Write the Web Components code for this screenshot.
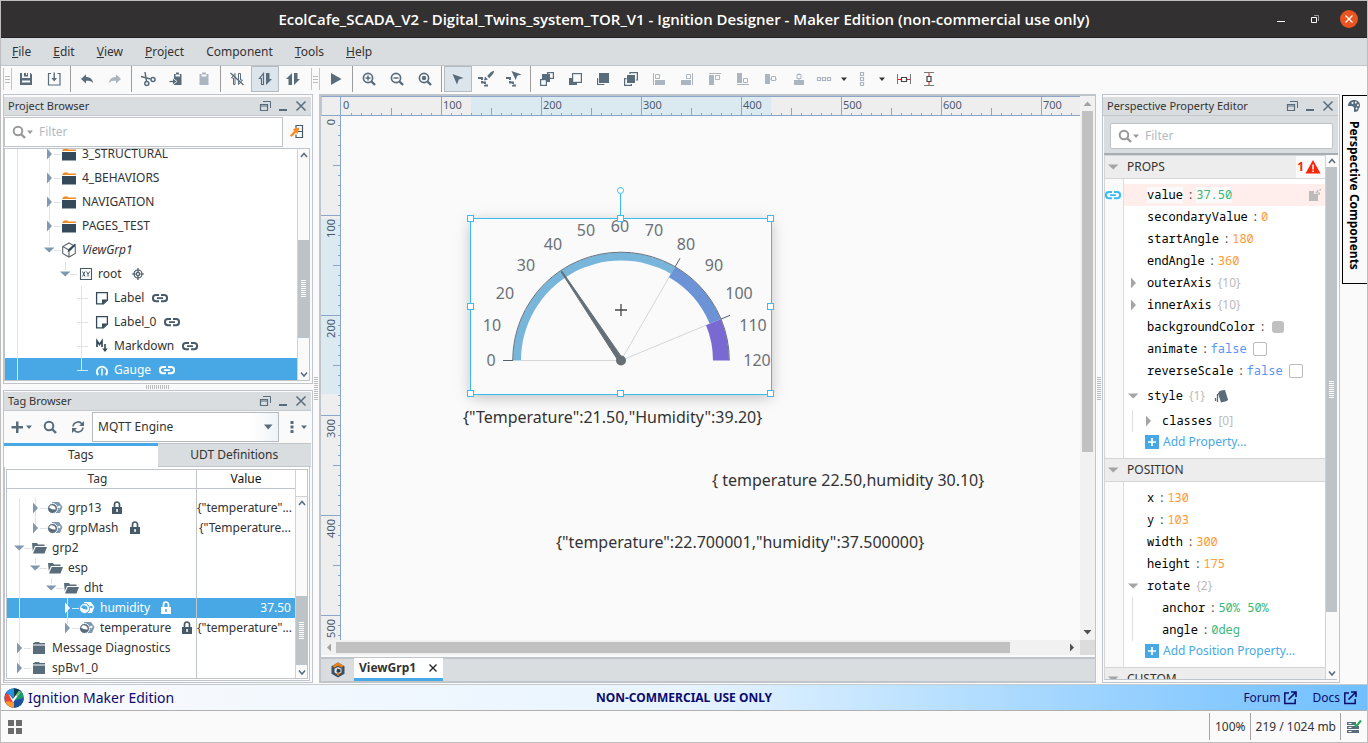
<!DOCTYPE html>
<html lang="en">
<head>
<meta charset="utf-8">
<title>Ignition Designer</title>
<style>
html, body { margin: 0; height: 100%; }
body { font-family: "Noto Sans", "Open Sans", sans-serif; font-size: 12px; line-height: 16px; color: #333; background: #fafafa; overflow: hidden; }
</style>
</head>
<body>
<designer-app></designer-app>
<script>
const ICONS = {
  save: '<path fill-rule="evenodd" d="M2 2h2v5h8V2h.6L14 3.500V14H2zM4 9.500v2h8v-2z"/><path d="M6 2h4v3.500H6z"/><path d="M8 2h1v2H8z" fill="#fafafa"/>',
  import: '<path d="M5 2.500H2.500v11.500h11.500V2.500H11.500" fill="none" stroke="currentColor" stroke-width="1.200"/><path d="M7.500 1.500h1.400V7H11l-2.800 3.500L5.400 7h2.100z"/>',
  undo: '<path d="M7 3.200V6c4 0 6.500 2 7.300 6.300C12.600 10.200 10.500 9.700 7 9.800v2.700L2 7.900z"/>',
  redo: '<path d="M9 3.200V6c-4 0-6.500 2-7.300 6.300C3.400 10.200 5.500 9.700 9 9.800v2.700l5-4.600z"/>',
  cut: '<g fill="none" stroke="currentColor" stroke-width="1.500"><path d="M5 1l1.500 9M1 5.500l9.500 2.500"/><circle cx="6.800" cy="12.600" r="2"/><circle cx="13" cy="8.600" r="2"/></g>',
  copy: '<path d="M6 3h2V1.500h3V3h2.500v11H6z"/><path d="M7.500 3.500h4.500v2H7.500z" fill="#fafafa"/><path d="M1 9.500h3.500V7L9 10.500 4.500 14v-2.500H1z" stroke="#fafafa" stroke-width=".8"/>',
  paste: '<path d="M3.500 3H6V1.500h4V3h2.500v11h-9z"/><path d="M5.500 3.500h5v2h-5z" fill="#fafafa"/>',
  commOff: '<g fill="none" stroke="currentColor"><path d="M4.500 13.500V7H2.500L6 2.500V13.500zM9.500 2.500v11L13.500 9h-2V2.500z"/><path d="M1.500 2l13 12" stroke-width="1.300"/></g>',
  commRead: '<path d="M4.500 13.500V7.500H2.500L6.500 2.500v11z" fill="none" stroke="currentColor" stroke-width="1.200"/><path d="M9 2h3.500v6H15L9 14z"/>',
  commRw: '<path d="M7 2v12H3.500V8H1zM9 2h3.500v6H15L9 14z"/>',
  play: '<path d="M3 2l10.500 6L3 14z"/>',
  zoomIn: '<g fill="none" stroke="currentColor"><circle cx="7" cy="7" r="4.600" stroke-width="1.700"/><path d="M10.500 10.500l3.500 3.500" stroke-width="2.400"/><path d="M4.500 7h5M7 4.500v5" stroke-width="1.500"/></g>',
  zoomOut: '<g fill="none" stroke="currentColor"><circle cx="7" cy="7" r="4.600" stroke-width="1.700"/><path d="M10.500 10.500l3.500 3.500" stroke-width="2.400"/><path d="M4.500 7h5" stroke-width="1.500"/></g>',
  zoomFit: '<g fill="none" stroke="currentColor"><circle cx="7" cy="7" r="4.600" stroke-width="1.700"/><path d="M10.500 10.500l3.500 3.500" stroke-width="2.400"/></g><circle cx="7" cy="7" r="2.200"/>',
  pointer: '<path d="M2.500 3l11 4-4.700 1.500L7 13.500z"/>',
  pathDraw: '<path d="M0 7h4v4.500h3v3h3" fill="none" stroke="currentColor" stroke-width="1.900" stroke-dasharray="6 1"/><path d="M7 5.500l3 3-4 1zM9.200 5L12.500 1.500q3-2 3.500-1.500t-1.500 3.500L11.200 7.300z"/>',
  pathEdit: '<path d="M0 7h4v4.500h3v3h3" fill="none" stroke="currentColor" stroke-width="1.900" stroke-dasharray="6 1"/><path d="M5.500 0l10 3.500-4.300 1.300L9.700 9z"/>',
  order1: '<rect x="8.600" y="1.600" width="5.800" height="5.800" fill="#fafafa" stroke="currentColor" stroke-width="1.200"/><path d="M3 3h8v8H3z"/><rect x="1.600" y="8.600" width="5.800" height="5.800" fill="#fafafa" stroke="currentColor" stroke-width="1.200"/>',
  order2: '<path d="M2 7h4v4h4v3H2z"/><rect x="5.600" y="2.600" width="8.800" height="8.800" fill="#fafafa" stroke="currentColor" stroke-width="1.200"/>',
  order3: '<path d="M4 2h10v10H4z"/><path d="M3 7.500H2.600v6h6.200V13" fill="none" stroke="currentColor" stroke-width="1.200"/>',
  order4: '<path d="M4 4h8v8H4z"/><path d="M7 3V1.600h7.400v7.400H13M3.500 7.600H1.600v6.800h6.800V13" fill="none" stroke="currentColor" stroke-width="1.200"/>',
  alignL: '<path d="M2 2h1v12H2zM4 9h10v5H4z"/><path d="M4.500 3.500h4v4h-4z" fill="none" stroke="currentColor"/>',
  alignR: '<path d="M13 2h1v12h-1zM2 9h10v5H2z"/><path d="M7.500 3.500h4v4h-4z" fill="none" stroke="currentColor"/>',
  alignT: '<path d="M2 2h12v1H2zM2 4h5v10H2z"/><path d="M8.500 4.500h4v4h-4z" fill="none" stroke="currentColor"/>',
  alignB: '<path d="M2 13h12v1H2zM2 2h5v10H2z"/><path d="M8.500 7.500h4v4h-4z" fill="none" stroke="currentColor"/>',
  centerV: '<path d="M2 3h5v10H2zM7 7.500h2v1H7zM12 7.500h2v1h-2z"/><path d="M8.500 5.500h4v4h-4z" fill="none" stroke="currentColor"/>',
  centerH: '<path d="M3 9h10v5H3zM7.500 2h1v2h-1zM7.500 7h1v2h-1z"/><path d="M6 3.500h4v4H6z" fill="none" stroke="currentColor"/>',
  distH: '<path d="M1.500 6.500h3v3h-3zM6.500 6.500h3v3h-3zM11.500 6.500h3v3h-3z" fill="none" stroke="currentColor" stroke-width="1.200"/>',
  distV: '<path d="M6.500 1.500h3v3h-3zM6.500 6.500h3v3h-3zM6.500 11.500h3v3h-3z" fill="none" stroke="currentColor" stroke-width="1.200"/>',
  stretchH: '<path d="M1.500 3v10M14.500 3v10" stroke="#777"/><path d="M2 8.500h12" stroke="#e02020"/><path d="M5.500 6.500h5v4h-5z" fill="#fff" stroke="#444" stroke-width="1.200"/>',
  stretchV: '<path d="M3 1.500h10M3 14.500h10" stroke="#777"/><path d="M8 2v12" stroke="#e02020"/><path d="M6 5.500h4v5H6z" fill="#fff" stroke="#444" stroke-width="1.200"/>',
  drop: '<path d="M5 6.500h6L8 10z"/>',
  dropBig: '<path d="M4 5.500h8.500L8.200 10.500z"/>',
  open: '<path d="M3 5.500h10.500L8.200 10.500z"/>',
  closed: '<path d="M6 2.500L11 8l-5 5.500z"/>',
  float: '<g fill="none" stroke="currentColor"><path d="M3.500 6.500h7v6h-7zM3.500 8h7" stroke-width="1.200"/><path d="M6 3.500h7.500v6.500"/></g>',
  min: '<path d="M4 11h8v2H4z"/>',
  close: '<path d="M3.500 3.500l9 9M12.500 3.500l-9 9" stroke="currentColor" stroke-width="1.500"/>',
  search: '<circle cx="7" cy="7" r="4.300" fill="none" stroke="currentColor" stroke-width="2"/><path d="M10 10l4 4" stroke="currentColor" stroke-width="2.400"/>',
  locate: '<path d="M7 6V2.500h6.500v12H7V11.500M7.500 8.500h6" fill="none" stroke="#465a69" stroke-width="1.200"/><path d="M1 12.500l4-4.500-1-2L10.500 4.500 8.500 11 7 9.500 2.500 14z" fill="#ff8a1e"/>',
  folderO: '<path d="M2 3.500l1-1h3.500l1 1H15V5H1z" fill="#f58a1f"/><path d="M1 6h14v8.500H1z" fill="#344a5a"/>',
  view: '<g fill="none" stroke="#5c6670" stroke-width="1.100"><path d="M8 1l6.300 3.500v7L8 15l-6.300-3.500v-7zM1.700 4.500L8 8v7M8 8l3-1.500"/></g><path d="M6.500 10l1-3 6.500-5.500 1 1.500L9 9z" fill="#344a5a"/>',
  root: '<path d="M3.500 2.500h11v11h-11z" fill="none" stroke="#465a69" stroke-width="1.100"/><path d="M5.500 5.500l2.500 5M8 5.500l-2.500 5M9.500 5.500l1.500 2.500v2.500M12.800 5.500L11 8" stroke="#465a69" fill="none"/>',
  target: '<g fill="none" stroke="#465a69" stroke-width="1.200"><circle cx="8" cy="8" r="4"/><circle cx="8" cy="8" r="1.600"/><path d="M8 2v4M8 10v4M2 8h4M10 8h4"/></g>',
  label: '<path d="M3.600 2.600h10.800v7.600l-4 3.700H3.600z" fill="none" stroke="#344a5a" stroke-width="1.300"/><path d="M9 14.500V9.500h5.500z" fill="#344a5a"/>',
  md: '<path d="M4 9V3l2.500 3.500L9 3v6" fill="none" stroke="#344a5a" stroke-width="1.700"/><path d="M11.200 6h1.600v4.500h2L12 14l-2.800-3.500h2z" fill="#344a5a"/>',
  gauge: '<path d="M5.200 13A5 5 0 1 1 12.800 13" fill="none" stroke="currentColor" stroke-width="2"/><path d="M8.300 6.500h1.400v7H8.300z"/>',
  link: '<path d="M7 5H4a3 3 0 0 0 0 6.200h3M9 5h3a3 3 0 0 1 0 6.200H9M5 8.100h6" fill="none" stroke="currentColor" stroke-width="1.900"/>',
  plus: '<path d="M7 2.500h2.500V7H14v2.500H9.500V14H7V9.500H2.500V7H7z"/>',
  refresh: '<path d="M3 7.500A5 5 0 0 1 12 5M13 8.500A5 5 0 0 1 4 11" fill="none" stroke="currentColor" stroke-width="1.600"/><path d="M14 2v5H9zM2 14V9h5z"/>',
  dots: '<path d="M6.500 2h3v3h-3zM6.500 6.500h3v3h-3zM6.500 11h3v3h-3z"/>',
  tag: '<path d="M5 2h7l3.500 5-2.500 6H8z" fill="#7e98b0"/><circle cx="12.300" cy="7" r="1.200" fill="#fff"/><circle cx="5.500" cy="8.500" r="5" fill="#5a6b7b" stroke="#fff"/><path d="M2 7.500Q3 4.500 6 5.500T8.500 9.500Q5 10 2 7.500z" fill="#fff"/>',
  tagSel: '<path d="M5 2h7l3.500 5-2.500 6H8z" fill="#fff"/><circle cx="12.300" cy="7" r="1.200" fill="#47a8e5"/><circle cx="5.500" cy="8.500" r="5" fill="#fff" stroke="#47a8e5"/><path d="M2 7.500Q3 4.500 6 5.500T8.500 9.500Q5 10 2 7.500z" fill="#47a8e5"/>',
  folderOpen: '<path d="M1 3h5l1 1.500h6.500V6H4L1.800 11z"/><path d="M4.700 7H16l-2.500 6.500H2z"/>',
  folder: '<path d="M3 3l1-1h4l1 1h5v1.500H2V3zM2 5.500h12v8.500H2z"/>',
  lock: '<path fill-rule="evenodd" d="M3 7h10v7H3zM7.300 9v3h1.500V9z"/><path d="M5.500 7V4.500a2.500 2.500 0 0 1 5 0V7" fill="none" stroke="currentColor" stroke-width="1.700"/>',
  up: '<path d="M5 10l3-3.500 3 3.500" fill="none" stroke="currentColor" stroke-width="1.500"/>',
  down: '<path d="M5 6.500L8 10l3-3.500" fill="none" stroke="currentColor" stroke-width="1.500"/>',
  warn: '<path d="M8 1l7.500 13.500H.5z" fill="#f5270b"/><path d="M7.300 5.500h1.500v5H7.300zM7.300 11.500h1.500V13H7.300z" fill="#fff"/>',
  note: '<path d="M2 4h5v3h4v7H2z"/><path d="M8.500 4.500h2v2h-2zM11 5.500h2v2h-2zM12.500 2h1.500v1.500h-1.500zM10 3h1.500v1.500H10z"/>',
  style: '<path d="M5 5.500Q6 3 8 2.500L12 2l3 9.500-1 1.500-6 1.500z"/><path d="M4.500 6v8M2.500 10v3" stroke="currentColor" stroke-width="1.300"/>',
  add: '<path d="M1 1h14v14H1z" fill="#47a8e5"/><path d="M4 8h8M8 4v8" stroke="#fff" stroke-width="1.700"/>',
  ext: '<path d="M7 3H2.800v10.500h10.400V9" fill="none" stroke="currentColor" stroke-width="1.500"/><path d="M9 2h5v5M13.500 2.500L6.500 9.500" fill="none" stroke="currentColor" stroke-width="1.600"/>',
  palette: '<path fill-rule="evenodd" d="M8 2c4 0 6 2.500 6 5.500 0 2.500-1.500 2.500-1.500 4S11 14 8 14v-3.500c0-1.500-1-2.500-3-2.500H2c0-4 3-6 6-6z"/><g fill="#fafafa"><circle cx="6.500" cy="5" r="1"/><circle cx="9.800" cy="4.600" r="1"/><circle cx="12" cy="7.300" r="1"/><circle cx="10.500" cy="10.500" r="1"/></g>',
  grid: '<path d="M1 1h6v6H1zM9 1h6v6H9zM1 9h6v6H1zM9 9h6v6H9z"/>',
  server: '<path d="M1 3h9v3H1zM1 7h12v3H1zM1 11h12v3H1z"/><path d="M2.500 4.500h3M2.500 8.500h3M2.500 12.500h3" stroke="#fff"/><path d="M8 4.500l2.500 2.500L15 1.500" fill="none" stroke="#27a35a" stroke-width="2"/>',
  cube: '<path d="M8 .5l6.500 3.800v7.400L8 15.500 1.500 11.700V4.300z" fill="#3c5060"/><path d="M8 .5l5.500 3.300-1.500 2L8 3.800 4 5.800l-1.500-2z" fill="#e8811f"/><path d="M8 5l3.500 1.800v3.700L8 12.500 4.500 10.500V6.800z" fill="#e3e7ea"/><path d="M7 6.500l3.500 1v2.500L8 11l-1.500-1z" fill="#2c3f4e"/><path d="M8 10.500l1.800 1-1.800 2.500-1.800-2.500z" fill="#e8811f"/>'
};

/* Registers an element; markup may be a string or a function of the host. */
function define(tag, css, markup, after) {
  customElements.define(tag, class extends HTMLElement {
    connectedCallback() {
      if (this.shadowRoot) return;
      const root = this.attachShadow({ mode: 'open' });
      const t = document.createElement('template');
      t.innerHTML = `<style>:host,*{box-sizing:border-box}${css}</style>` + (typeof markup === 'function' ? markup(this) : markup);
      root.append(t.content.cloneNode(true));
      if (after) after(root, this);
    }
  });
}
const at = (el, n, d = '') => el.getAttribute(n) ?? d;

define('ui-icon', `:host{display:inline-block;width:16px;height:16px;flex:none}svg{display:block;width:100%;height:100%}`,
  el => `<svg viewBox="0 0 16 16" fill="currentColor" aria-hidden="true">${ICONS[at(el, 'name')] || ''}</svg>`);

define('title-bar', `
  :host{display:grid;grid-template-columns:1fr auto 1fr;align-items:center;height:37px;background:#323031;color:#fff;border-bottom:1px solid #232122}
  h1{margin:0;font-size:15px;font-family:"Open Sans","Noto Sans",sans-serif;font-weight:600;line-height:20px;grid-column:2}
  div{display:flex;justify-content:flex-end;align-items:center;gap:16px;padding-right:9px}
  button{border:0;padding:0;background:none;color:#fff;width:18px;height:18px;border-radius:9px}
  button.x{background:#e95420}svg{display:block}`,
  `<h1>EcolCafe_SCADA_V2 - Digital_Twins_system_TOR_V1 - Ignition Designer - Maker Edition (non-commercial use only)</h1>
   <div><button aria-label="Minimize"><svg width="18" height="18"><path d="M5 11.500h8" stroke="#fff"/></svg></button>
   <button aria-label="Restore"><svg width="18" height="18" fill="none"><path d="M5.500 7.500h5v5h-5z" stroke="#fff"/><path d="M8 5.500h4.500V11" stroke="#999"/></svg></button>
   <button class="x" aria-label="Close"><svg width="18" height="18"><path d="M5.500 5.500l7 7M12.500 5.500l-7 7" stroke="#fff" stroke-width="1.300"/></svg></button></div>`);

define('menu-bar', `
  :host{display:block;height:28px;background:#d9dde0;border-bottom:1px solid #bfc5c9}
  nav{display:flex;height:100%}
  button{border:0;background:none;font:inherit;color:inherit;padding:0 11px;line-height:16px}`,
  `<nav><button><u>F</u>ile</button><button><u>E</u>dit</button><button><u>V</u>iew</button><button><u>P</u>roject</button><button>Component</button><button><u>T</u>ools</button><button><u>H</u>elp</button></nav>`);

define('tool-button', `
  :host{display:block;width:28px;height:26px;flex:none;color:#586c7c}
  :host([off]){color:#aab5bf}
  :host([narrow]){width:18px}
  :host([mid]){width:22px}
  button{display:flex;align-items:center;justify-content:center;width:100%;height:100%;padding:0;border:1px solid transparent;background:none;color:inherit}
  :host([on]) button{background:#dde5ec;border-color:#b5babf}
  :host([dark]){color:#333}`,
  el => `<button aria-label="${at(el, 'icon')}"><ui-icon name="${at(el, 'icon')}"></ui-icon></button>`);

define('tool-bar', `
  :host{display:flex;height:28px;background:#fafafa;padding-left:1px}
  i{flex:none;width:1px;height:26px;background:#9d9d9d;margin:0 2px}
  .grip{flex:none;width:9px;height:22px;margin:2px 0 0 1px;border-left:1px solid #c5c5c5;border-right:1px solid #c5c5c5;
    background:repeating-linear-gradient(#bbb 0 1px,transparent 1px 3px) center/5px 7px no-repeat}
  .grip.second{margin-left:4px;margin-right:2px}`,
  () => {
    const b = (s, x = '') => s.split(' ').map(n => `<tool-button icon="${n}" ${x}></tool-button>`).join('');
    return `<span class="grip"></span>${b('save import')}<i></i>${b('undo')}${b('redo', 'off')}<i></i>${b('cut copy')}${b('paste', 'off')}<i></i>${b('commOff')}${b('commRead', 'on')}${b('commRw')}<span class="grip second"></span>${b('play')}<i></i>${b('zoomIn zoomOut zoomFit')}<i></i>${b('pointer', 'on')}${b('pathDraw pathEdit')}<i></i>${b('order1 order2 order3 order4')}${b('alignL alignR alignT alignB centerV centerH', 'off')}${b('distH', 'off mid')}${b('drop', 'dark narrow')}${b('distV', 'off narrow')}${b('drop', 'dark mid')}${b('stretchH', 'mid')}${b('stretchV')}`;
  });

define('dock-panel', `
  :host{display:flex;flex-direction:column;min-height:0;border:1px solid #bfc5ca;padding:1px 1px 0 0}
  header{display:flex;align-items:center;flex:none;height:19px;background:#d9dde0;border-bottom:1px solid #c4c9cd;padding:0 1px 0 4px}
  h2{margin:0;flex:1;font-size:11px;font-weight:400;line-height:16px}
  button{border:0;background:none;padding:0;width:18px;height:16px;color:#586c7c}
  section{flex:1;min-height:0;display:flex;flex-direction:column}`,
  el => `<header><h2>${at(el, 'heading')}</h2><button aria-label="Float"><ui-icon name="float"></ui-icon></button><button aria-label="Minimize"><ui-icon name="min"></ui-icon></button><button aria-label="Close"><ui-icon name="close"></ui-icon></button></header><section><slot></slot></section>`);

define('filter-box', `
  :host{display:flex;align-items:center;background:#fff;border:1px solid #bfc5ca;color:#999;padding-left:6px}
  input{flex:1;min-width:0;border:0;outline:0;background:none;font:inherit;color:#333;padding:0}
  input::placeholder{color:#b3bbc4;opacity:1}
  .d{width:8px;height:16px;overflow:hidden;margin-right:4px}.d ui-icon{margin-left:-5px}`,
  `<ui-icon name="search"></ui-icon><span class="d"><ui-icon name="drop"></ui-icon></span><input type="text" placeholder="Filter" aria-label="Filter">`);

define('scroll-bar', `
  :host{display:flex;flex-direction:column;flex:none;width:12px;background:#fafafa;border-left:1px solid #cfd3d6;color:#586c7c}
  b{flex:none;height:12px;display:flex;align-items:center;justify-content:center;overflow:hidden;background:#fafafa}
  .thumb{background:#bdc3c7;display:grid;place-items:center}
  .thumb::after{content:"";width:5px;height:17px;background:repeating-linear-gradient(#fff 0 1px,transparent 1px 2px)}
  :host([flat]){width:15px;background:#f1f1f1;border:0;color:#505050}
  :host([flat]) b{height:15px;background:none}
  :host([flat]) .thumb{background:#c1c1c1;margin:0 2px}
  :host([flat]) .thumb::after{display:none}
  :host([flat=h]){flex-direction:row;width:auto;height:15px}
  :host([flat=h]) b{width:15px}
  :host([flat=h]) .thumb{margin:2px 0}
  .dim{color:#a3a3a3}svg{display:block}`,
  el => {
    const [a, t, c] = at(el, 'parts').split(' ');
    const f = at(el, 'flat');
    const tri = p => `<svg width="11" height="11" fill="currentColor"><path d="${p}"/></svg>`;
    const s = f === 'h' ? tri('M8 1.500v8L4 5.500z') : f ? tri('M1.500 8h8l-4-4.500z') : '<ui-icon name="up"></ui-icon>';
    const e = f === 'h' ? tri('M3 1.500v8l4-4z') : f ? tri('M1.500 3h8l-4 4.500z') : '<ui-icon name="down"></ui-icon>';
    return `<b class="${f ? 'dim' : ''}">${s}</b><span style="flex:${a} 1 0"></span><span class="thumb" style="flex:${t} 1 0"></span><span style="flex:${c} 1 0"></span><b>${e}</b>`;
  });

/* guides: x offsets of the vertical connector lines inside the row, each with an optional length */
define('tree-row', `
  :host{display:flex;align-items:center;height:var(--row,24px);white-space:nowrap;padding-left:calc(var(--indent,36px) + var(--level)*16px);background-repeat:no-repeat}
  :host([selected]){background-color:#47a8e5;color:#fff}
  .a{width:16px;height:16px;color:#8099b1;margin-right:4px}
  :host([selected]) .a{color:#fff}
  .i{color:#586c7c;margin-right:5px}
  .x{color:#465a69;margin-left:var(--badge,8px)}
  :host([selected]) .i,:host([selected]) .x{color:#fff}
  :host([italic]){font-style:italic}`,
  el => `<span class="a">${el.hasAttribute('arrow') ? `<ui-icon name="${at(el, 'arrow')}"></ui-icon>` : ''}</span><ui-icon class="i" name="${at(el, 'icon')}"></ui-icon><slot></slot>${el.hasAttribute('badge') ? `<ui-icon class="x" name="${at(el, 'badge')}"></ui-icon>` : ''}`,
  (root, el) => {
    const lv = +at(el, 'level', '0'), base = +at(el, 'base', '36');
    el.style.setProperty('--level', lv);
    const col = el.hasAttribute('selected') ? '#cfe8fa' : '#dfe2e6';
    const g = at(el, 'guides').split(' ').filter(Boolean).map(v => {
      const [x, h] = v.split(':');
      return [`${x}px 0`, `1px ${h || '100%'}`];
    });
    const has = el.hasAttribute('arrow');
    g.push([`${base + lv * 16 + (has ? 13 : 4)}px 50%`, `${has ? 7 : 11}px 1px`]);
    el.style.backgroundImage = g.map(() => `linear-gradient(${col},${col})`).join(',');
    el.style.backgroundPosition = g.map(s => s[0]).join(',');
    el.style.backgroundSize = g.map(s => s[1]).join(',');
  });

define('project-browser', `
  :host{display:flex;flex-direction:column;flex:1;min-height:0}
  .f{display:flex;flex:none;height:32px;padding-top:1px}
  filter-box{flex:1;height:30px}
  .f button{width:28px;border:0;background:none;padding:0}
  .t{display:flex;flex:1;min-height:0;border:1px solid #bfc5ca;background:#fff;margin:0 1px 2px 0}
  .l{flex:1;overflow:hidden;min-width:0}
  .l div{margin-top:-7px}`,
  `<div class="f"><filter-box></filter-box><button aria-label="Locate"><ui-icon name="locate"></ui-icon></button></div>
  <div class="t"><div class="l"><div>
   <tree-row arrow="closed" icon="folderO" guides="12 44">3_STRUCTURAL</tree-row>
   <tree-row arrow="closed" icon="folderO" guides="12 44">4_BEHAVIORS</tree-row>
   <tree-row arrow="closed" icon="folderO" guides="12 44">NAVIGATION</tree-row>
   <tree-row arrow="closed" icon="folderO" guides="12 44">PAGES_TEST</tree-row>
   <tree-row arrow="open" icon="view" italic guides="12 44:8px">ViewGrp1</tree-row>
   <tree-row level="1" arrow="open" icon="root" badge="target" guides="12 60:8px">root</tree-row>
   <tree-row level="2" icon="label" badge="link" guides="12 76">Label</tree-row>
   <tree-row level="2" icon="label" badge="link" guides="12 76">Label_0</tree-row>
   <tree-row level="2" icon="md" badge="link" guides="12 76">Markdown</tree-row>
   <tree-row level="2" icon="gauge" badge="link" selected guides="12 76:12px">Gauge</tree-row>
  </div></div><scroll-bar parts="79 99 30"></scroll-bar></div>`);

define('tag-browser', `
  :host{display:flex;flex-direction:column;flex:1;min-height:0}
  .b{display:flex;align-items:center;flex:none;height:32px;color:#586c7c}
  .b button{border:0;background:none;padding:0;height:24px;color:inherit;display:flex;align-items:center;justify-content:center;width:28px}
  .b .d{width:32px;justify-content:flex-start;padding-left:5px}.b .d ui-icon+ui-icon{margin-left:-4px}
  .s{flex:1;display:grid;height:30px;align-items:center}
  select{grid-area:1/1;appearance:none;width:100%;height:30px;border:1px solid #b5babf;border-radius:0;background:linear-gradient(to right,#fff 85%,#eff3f7);font:inherit;color:#333;padding:0 5px}
  .s ui-icon{grid-area:1/1;justify-self:end;margin-right:3px;pointer-events:none}
  .tabs{display:flex;flex:none;height:24px}
  .tabs button{flex:1;border:0;border-top:3px solid #47a8e5;background:#fff;font:inherit;color:inherit;padding:0 0 3px}
  .tabs button+button{background:#d9dde0;border-top:1px solid #bfc5ca;border-bottom:1px solid #bfc5ca;padding:0}
  .w{flex:1;min-height:0;border:1px solid #bfc5ca;border-top:0;margin:0 1px 1px 0;padding:2px 1px 1px 1px;background:#fff;display:flex}
  .box{flex:1;display:flex;border:1px solid #bfc5ca;min-height:0;min-width:0}
  .tb{flex:1;overflow:hidden;min-width:0}
  table{border-collapse:separate;border-spacing:0;table-layout:fixed;width:100%}
  th{font-weight:400;height:19px;padding:0 8px 0 0;border-bottom:1px solid #bfc5ca;line-height:18px}
  td{height:20px;padding:0;overflow:hidden;white-space:nowrap}
  tr.gap td{height:9px}
  th+th,td+td{border-left:1px solid #bfc5ca;width:99px;text-align:right;padding-right:4px}
  th+th{text-align:center;color:#111;padding:0}
  tr.sel td{background:#47a8e5;color:#fff}
  tree-row{--row:20px;--indent:4px;--badge:8px}
  .sb{display:flex;flex-direction:column}.sb span{height:27px;width:12px;border-left:1px solid #cfd3d6;border-bottom:1px solid #cfd3d6}.sb scroll-bar{flex:1}`,
  () => {
    const r = (lv, arrow, icon, text, val = '', x = '', cls = '') => `<tr class="${cls}"><td><tree-row base="4" level="${lv}" arrow="${arrow}" icon="${icon}" ${x}>${text}</tree-row></td><td>${val}</td></tr>`;
    return `<div class="b"><button class="d" aria-label="Add"><ui-icon name="plus"></ui-icon><ui-icon name="drop"></ui-icon></button><button aria-label="Search"><ui-icon name="search"></ui-icon></button><button aria-label="Refresh"><ui-icon name="refresh"></ui-icon></button><span class="s"><select aria-label="Tag provider"><option>MQTT Engine</option></select><ui-icon name="dropBig"></ui-icon></span><button class="d" aria-label="More"><ui-icon name="dots"></ui-icon><ui-icon name="drop"></ui-icon></button></div>
    <div class="tabs"><button>Tags</button><button>UDT Definitions</button></div>
    <div class="w"><div class="box"><div class="tb"><table><thead><tr><th>Tag</th><th>Value</th></tr></thead><tbody><tr class="gap"><td></td><td></td></tr>
    ${r(1, 'closed', 'tag', 'grp13', '{"temperature"...', 'badge="lock" guides="12 28"')}
    ${r(1, 'closed', 'tag', 'grpMash', '{"Temperature...', 'badge="lock" guides="12 28:12px"')}
    ${r(0, 'open', 'folderOpen', 'grp2', '', 'guides="12"')}
    ${r(1, 'open', 'folderOpen', 'esp', '', 'guides="12 28:6px"')}
    ${r(2, 'open', 'folderOpen', 'dht', '', 'guides="12 44:6px"')}
    ${r(3, 'closed', 'tagSel', 'humidity', '37.50', 'badge="lock" selected guides="12 60"', 'sel')}
    ${r(3, 'closed', 'tag', 'temperature', '{"temperature"...', 'badge="lock" guides="12 60:6px"')}
    ${r(0, 'closed', 'folder', 'Message Diagnostics', '', 'guides="12"')}
    ${r(0, 'closed', 'folder', 'spBv1_0', '', 'guides="12:10px"')}
    </tbody></table></div><div class="sb"><span></span><scroll-bar parts="87 69 1"></scroll-bar></div></div></div>`;
  });

/* A ruler that redraws its ticks and numbers for the length it is given. */
define('pixel-ruler', `
  :host{display:block;overflow:hidden;background:#eee;min-width:0;min-height:0}svg{display:block}
  text{font-size:11px;fill:#4b5b6e}`,
  '<svg></svg>',
  (root, el) => {
    const svg = root.querySelector('svg');
    const v = at(el, 'axis') === 'y', [f, t] = at(el, 'mark').split(' ').map(Number);
    const draw = () => {
      const N = v ? el.clientHeight : el.clientWidth;
      let d = '', txt = '';
      for (let i = 0; i < N; i += 10) {
        const len = i % 100 === 0 ? 20 : i % 50 === 0 ? 8 : 3;
        if (i) d += v ? `M${20 - len} ${i - .5}h${len}` : `M${i + .5} ${20 - len}v${len}`;
        if (i % 100 === 0 && i + 22 < N) txt += v ? `<text transform="translate(14 ${i + 3}) rotate(-90)" text-anchor="end">${i}</text>` : `<text x="${i + 2}" y="13">${i}</text>`;
      }
      svg.setAttribute('width', v ? 20 : N);
      svg.setAttribute('height', v ? N : 20);
      svg.innerHTML = `<rect ${v ? `x="0" y="${f}" width="20" height="${t - f}"` : `x="${f}" y="0" width="${t - f}" height="20"`} fill="#dbeaf1"/><path d="${d}" stroke="#8ba6c9"/><path d="${v ? `M19.500 0v${N}` : `M0 19.500h${N}M0 .5h${N}`}" stroke="#8ba6c9"/>${txt}`;
    };
    new ResizeObserver(draw).observe(el);
  });

define('gauge-view', `:host{display:block}svg{display:block;overflow:visible}text{font-size:16px;fill:#6b7177;text-anchor:middle}`,
  () => {
    const cx = 621, cy = 360.5;
    const pt = (r, v) => { const a = Math.PI * (1 - v / 120); return `${(cx + r * Math.cos(a)).toFixed(2)} ${(cy - r * Math.sin(a)).toFixed(2)}`; };
    const band = (v0, v1, r0, r1, c) => `<path fill="${c}" d="M${pt(r1, v0)}A${r1} ${r1} 0 0 1 ${pt(r1, v1)}L${pt(r0, v1)}A${r0} ${r0} 0 0 0 ${pt(r0, v0)}z"/>`;
    const tick = v => `<path d="M${pt(108, v)}L${pt(118, v)}" stroke="#555f68"/><path d="M${cx} ${cy}L${pt(100, v)}" stroke="#d5d6d8"/>`;
    const pos = [[491, 366], [492, 331], [505, 299], [526, 271], [553, 250], [586, 236], [620, 232], [654, 236], [686, 250], [714, 271], [739, 299], [753, 331], [757, 366]];
    return `<svg width="330" height="230" viewBox="460 180 330 230">${[0, 80, 105].map(tick).join('')}
    ${band(0, 80, 100, 108, '#78b5da')}${band(80, 105, 96, 108, '#6b93d6')}${band(105, 120, 92, 108, '#7a69d3')}
    <path d="M${pt(108.3, 0)}A108.300 108.300 0 0 1 ${pt(108.3, 120)}" fill="none" stroke="#68727a"/>
    <path d="M619 362L${pt(107, 37.3)}L${pt(107, 37.7)}L623 359z" fill="#676f76" stroke="#676f76"/><circle cx="${cx}" cy="${cy}" r="5" fill="#676f76"/>
    ${pos.map((p, i) => `<text x="${p[0]}" y="${p[1]}">${i * 10}</text>`).join('')}</svg>`;
  });

define('selection-frame', `:host{display:block}svg{display:block;overflow:visible}`,
  () => {
    const h = [[470, 218], [620, 218], [770, 218], [470, 306], [770, 306], [470, 393], [620, 393], [770, 393]];
    return `<svg width="330" height="230" viewBox="460 180 330 230" fill="none" stroke="#38bdf2"><rect x="470.500" y="218.500" width="301" height="176" /><path d="M620.500 194v24"/><circle cx="620.500" cy="190.500" r="3" fill="#fff"/>${h.map(p => `<rect x="${p[0] - 2.5}" y="${p[1] - 2.5}" width="6" height="6" fill="#fff"/>`).join('')}<path d="M615 310h12M621 304v12" stroke="#fff" stroke-width="3"/><path d="M615 310h12M621 304v12" stroke="#444" stroke-width="1.300"/></svg>`;
  });

define('design-canvas', `
  :host{display:grid;grid-template-columns:20px minmax(0,1fr) 15px;grid-template-rows:20px minmax(0,1fr) 15px;flex:1;min-height:0;background:#fafafa;padding-bottom:2px}
  .c{background:#eee;border:1px solid #8ba6c9;border-left-color:#bfc5ca}
  .surface{position:relative;overflow:hidden}
  .surface>*{position:absolute}
  p{margin:0;font-size:16px;line-height:22px;white-space:nowrap}
  .shadow{left:130px;top:103px;width:300px;height:175px;background:#fafafa;box-shadow:0 3px 14px rgba(0,0,0,.25)}
  .art{left:119px;top:64px}
  scroll-bar[flat=v]{grid-column:3;grid-row:1/3}
  scroll-bar[flat=h]{grid-column:1/3}
  .k{background:#dcdcdc}`,
  `<div class="c"></div><pixel-ruler axis="x" mark="130 430"></pixel-ruler><scroll-bar flat="v" parts="0 341 173"></scroll-bar>
   <pixel-ruler axis="y" mark="103 278"></pixel-ruler>
   <div class="surface"><div class="shadow"></div><gauge-view class="art"></gauge-view><selection-frame class="art"></selection-frame>
   <p style="left:122px;top:290px">{"Temperature":21.50,"Humidity":39.20}</p><p style="left:371px;top:353px">{ temperature 22.50,humidity 30.10}</p><p style="left:215px;top:415px">{"temperature":22.700001,"humidity":37.500000}</p></div>
   <scroll-bar flat="h" parts="0 673 55"></scroll-bar><div class="k"></div>`);

define('editor-tabs', `
  :host{display:flex;flex:none;height:26px;background:#d9dde0;border-top:2px solid #bfc5ca;border-bottom:2px solid #bfc5ca}
  button{border:0;background:none;font:inherit;color:inherit;padding:0}
  .h{width:33px;display:grid;place-items:center}
  .t{display:flex;align-items:center;gap:12px;height:23px;margin-top:-1px;background:#fff;border-bottom:3px solid #47a8e5;padding:0 5px;font-weight:700}
  .x{width:10px;height:10px}svg{display:block}`,
  `<button class="h" aria-label="Home"><ui-icon name="cube"></ui-icon></button><div class="t"><span>ViewGrp1</span><button class="x" aria-label="Close tab"><svg width="10" height="10"><path d="M1.500 1.500l7 7M8.500 1.500l-7 7" stroke="#222" stroke-width="1.300"/></svg></button></div>`);

define('prop-section', `
  :host{display:block}
  header{display:flex;align-items:center;height:24px;background:#ededed;border-top:1px solid #d5d5d5;border-bottom:1px solid #d5d5d5;color:#a5a5a5}
  h3{margin:0 0 0 6px;font-size:12px;font-weight:400;color:#333;flex:1}
  span{display:flex;align-items:center;gap:1px;height:22px;background:#fafafa;color:#f5270b;font-weight:700;padding:0 4px 0 1px}
  .body{padding:5px 0 6px;background:linear-gradient(to right,#fafafa 18px,#dcdcdc 18px 19px,#fff 19px)}`,
  el => `<header><ui-icon name="open"></ui-icon><h3>${at(el, 'heading')}</h3>${el.hasAttribute('errors') ? `<span>${at(el, 'errors')}<ui-icon name="warn"></ui-icon></span>` : ''}</header><div class="body"><slot></slot></div>`);

define('prop-row', `
  :host{display:flex;align-items:center;height:22px;font-family:"Noto Sans Mono","DejaVu Sans Mono",monospace;white-space:nowrap;color:#000}
  :host([tall]){height:28px}
  .g{width:19px;display:flex;align-items:center;color:#38bdf2;flex:none;height:100%}
  .r{flex:1;display:flex;align-items:center;height:100%;min-width:0}
  :host([bound]) .r{background:#ffeeec}
  :host([bound]) .n,:host([bound]) .v{background:#fafafa}
  .a{width:18px;height:16px;display:grid;place-items:center;color:#a5a5a5;margin-right:5px;flex:none}
  :host([child]) .a{margin-left:15px}
  :host([child]) .r{background:linear-gradient(#e0e0e0,#e0e0e0) 8px 0/1px 100% no-repeat}
  .c{margin:0 2px 0 4px;color:#444}
  .num{color:#ff9a35}.str{color:#3cb878}.bool{color:#5b94f5}
  .obj{font-family:"Noto Sans",sans-serif;color:#bbb;margin:0 8px 0 6px}
  .note{margin:0 2px 0 auto;color:#bbb}
  .sw{width:12px;height:12px;border-radius:3px;background:#c0c0c0;margin-left:4px}
  input{appearance:none;width:14px;height:14px;margin:0 0 0 6px;border:1px solid #bbb;border-radius:2px;background:#fff}
  .st{color:#586c7c}`,
  el => {
    const n = at(el, 'name'), v = at(el, 'value'), k = at(el, 'kind');
    const label = k === 'bool' ? `<label class="n" for="f">${n}</label>` : `<span class="n">${n}</span>`;
    return `<span class="g">${el.hasAttribute('bound') ? '<ui-icon name="link"></ui-icon>' : ''}</span><span class="r"><span class="a">${el.hasAttribute('arrow') ? `<ui-icon name="${at(el, 'arrow')}"></ui-icon>` : ''}</span>${label}${k === 'obj' ? '' : '<span class="c">:</span>'}<span class="v ${k}">${v}</span>${k === 'bool' ? '<input id="f" type="checkbox">' : ''}${k === 'color' ? '<span class="sw"></span>' : ''}${n === 'style' ? '<ui-icon class="st" name="style"></ui-icon>' : ''}${el.hasAttribute('bound') ? '<ui-icon class="note" name="note"></ui-icon>' : ''}</span>`;
  });

define('add-link', `
  :host{display:block;height:20px;padding-left:39px}
  a{display:flex;align-items:center;gap:3px;height:20px;color:#47a8e5;text-decoration:none}`,
  `<a href="#"><ui-icon name="add"></ui-icon><span><slot></slot></span></a>`);

define('property-editor', `
  :host{display:flex;flex-direction:column;flex:1;min-height:0;margin-left:1px}
  .f{flex:none;background:#d9dde0;padding:7px 5px 0 6px;height:39px;border-bottom:2px solid #a8adb1}
  filter-box{height:26px;border-radius:2px}
  .m{flex:1;display:flex;min-height:0;margin:0 1px 2px 0;border-bottom:1px solid #bfc5ca;border-left:1px solid #d5d5d5}
  .l{flex:1;overflow:hidden;min-width:0}`,
  () => {
    const p = (name, value, kind, x = '') => `<prop-row name="${name}" value="${value}" kind="${kind}" ${x}></prop-row>`;
    return `<div class="f"><filter-box></filter-box></div><div class="m"><div class="l">
    <prop-section heading="PROPS" errors="1">${p('value', '37.50', 'str', 'bound')}${p('secondaryValue', '0', 'num')}${p('startAngle', '180', 'num')}${p('endAngle', '360', 'num')}${p('outerAxis', '{10}', 'obj', 'arrow="closed"')}${p('innerAxis', '{10}', 'obj', 'arrow="closed"')}${p('backgroundColor', '', 'color')}${p('animate', 'false', 'bool')}${p('reverseScale', 'false', 'bool')}${p('style', '{1}', 'obj', 'arrow="open" tall')}${p('classes', '[0]', 'obj', 'arrow="closed" child')}<add-link>Add Property...</add-link></prop-section>
    <prop-section heading="POSITION">${p('x', '130', 'num')}${p('y', '103', 'num')}${p('width', '300', 'num')}${p('height', '175', 'num')}${p('rotate', '{2}', 'obj', 'arrow="open"')}${p('anchor', '50% 50%', 'str', 'child')}${p('angle', '0deg', 'str', 'child')}<add-link>Add Position Property...</add-link></prop-section>
    <prop-section heading="CUSTOM"></prop-section></div><scroll-bar parts="0 446 55"></scroll-bar></div>`;
  });

define('side-tab', `
  :host{display:block;padding:1px 0 0 2px}
  button{display:flex;flex-direction:column;align-items:center;width:25px;height:189px;border:1px solid #000;border-right:0;background:#fafafa;padding:2px 3px 0 0;gap:7px;font:inherit;font-weight:700;color:#000}
  ui-icon{color:#586c7c}
  span{writing-mode:vertical-rl;white-space:nowrap}`,
  `<button><ui-icon name="palette"></ui-icon><span>Perspective Components</span></button>`);

define('edition-bar', `
  :host{display:grid;grid-template-columns:1fr auto 1fr;align-items:center;height:27px;color:#0b0b6e;border-top:1px solid #c6cbd0;border-bottom:1px solid #b0b0b0;
    background:linear-gradient(to right,#fafbfd,#e8f4ff 50%,#c2e4ff 65%,#98d1ff 82%,#70bfff)}
  .a{display:flex;align-items:center;gap:4px;padding-left:3px;font-size:14px;line-height:20px}
  b{font-size:12px}
  .r{display:flex;justify-content:flex-end;gap:14px;padding-right:9px}
  a{display:flex;align-items:center;gap:2px;color:inherit;text-decoration:none}
  svg{display:block}`,
  `<span class="a"><svg width="20" height="20" viewBox="0 0 20 20"><circle cx="10" cy="10" r="9.800" fill="#1d5fb4"/><path d="M2 5A9.800 9.800 0 0 1 10 .2V10z" fill="#2f8fe0"/><path d="M10 .2A9.800 9.800 0 0 1 17 3L10 11z" fill="#0c3f4c"/><path d="M17 3A9.800 9.800 0 0 1 19.800 10L11 12z" fill="#1f9a6c"/><path d="M19.800 10A9.800 9.800 0 0 1 10 19.800l1-7z" fill="#1b4fa0"/><path d="M1.500 6Q4 5 6 8l4 5v6.800A9.800 9.800 0 0 1 1.500 6z" fill="#ee3f35"/><path d="M1.500 14q3-2 8.500 1v4.800Q4 19.500 1.500 14z" fill="#ff9a2a"/><path d="M4.500 6l4.500 8.500L16.500 4l-1.500-1-6 8z" fill="#fff"/><path d="M12 7.500l3-4.500 1.500 1-3 4z" fill="#5cc64a"/></svg>Ignition Maker Edition</span>
   <b>NON-COMMERCIAL USE ONLY</b><span class="r"><a href="#">Forum<ui-icon name="ext"></ui-icon></a><a href="#">Docs<ui-icon name="ext"></ui-icon></a></span>`);

define('status-bar', `
  :host{display:flex;align-items:center;height:31px;background:#fafafa;padding:0 5px 0 6px}
  .g{color:#6b6b6b;margin-right:auto}
  span{height:27px;line-height:27px;border-left:1px solid #a5a5a5;padding:0 4px 0 5px}
  .s{display:flex;align-items:center;color:#586c7c;padding-right:0}`,
  `<ui-icon class="g" name="grid"></ui-icon><span>100%</span><span>219 / 1024 mb</span><span class="s"><ui-icon name="server"></ui-icon></span>`);

define('designer-app', `
  :host{display:flex;flex-direction:column;height:100vh;border:1px solid #bdbdbd}
  main{flex:1;min-height:0;display:grid;grid-template-columns:310px 6px minmax(0,1fr) 6px 238px 27px;grid-template-rows:minmax(0,1fr);padding:0 0 1px 2px}
  .left{display:flex;flex-direction:column;min-height:0}
  .pb{flex:1;padding-top:2px}.tb{flex:none;height:293px}
  .dots{height:6px;display:grid;place-items:center}
  .dots i{width:24px;height:4px;background:repeating-linear-gradient(to right,#bbb 0 1px,transparent 1px 2px)}
  .split{display:grid;place-items:center}
  .split i{width:4px;height:24px;background:repeating-linear-gradient(#bbb 0 1px,transparent 1px 2px)}
  .center{display:flex;flex-direction:column;min-height:0;border:1px solid #bfc5ca;border-width:2px 1px 0 2px}
  .pe{padding-top:2px}`,
  `<title-bar></title-bar><menu-bar></menu-bar><tool-bar></tool-bar>
  <main><div class="left"><dock-panel class="pb" heading="Project Browser"><project-browser></project-browser></dock-panel><div class="dots"><i></i></div><dock-panel class="tb" heading="Tag Browser"><tag-browser></tag-browser></dock-panel></div>
  <div class="split"><i></i></div><div class="center"><design-canvas></design-canvas><editor-tabs></editor-tabs></div><div class="split"><i></i></div>
  <dock-panel class="pe" heading="Perspective Property Editor"><property-editor></property-editor></dock-panel><side-tab></side-tab></main>
  <edition-bar></edition-bar><status-bar></status-bar>`);
</script>
</body>
</html>
